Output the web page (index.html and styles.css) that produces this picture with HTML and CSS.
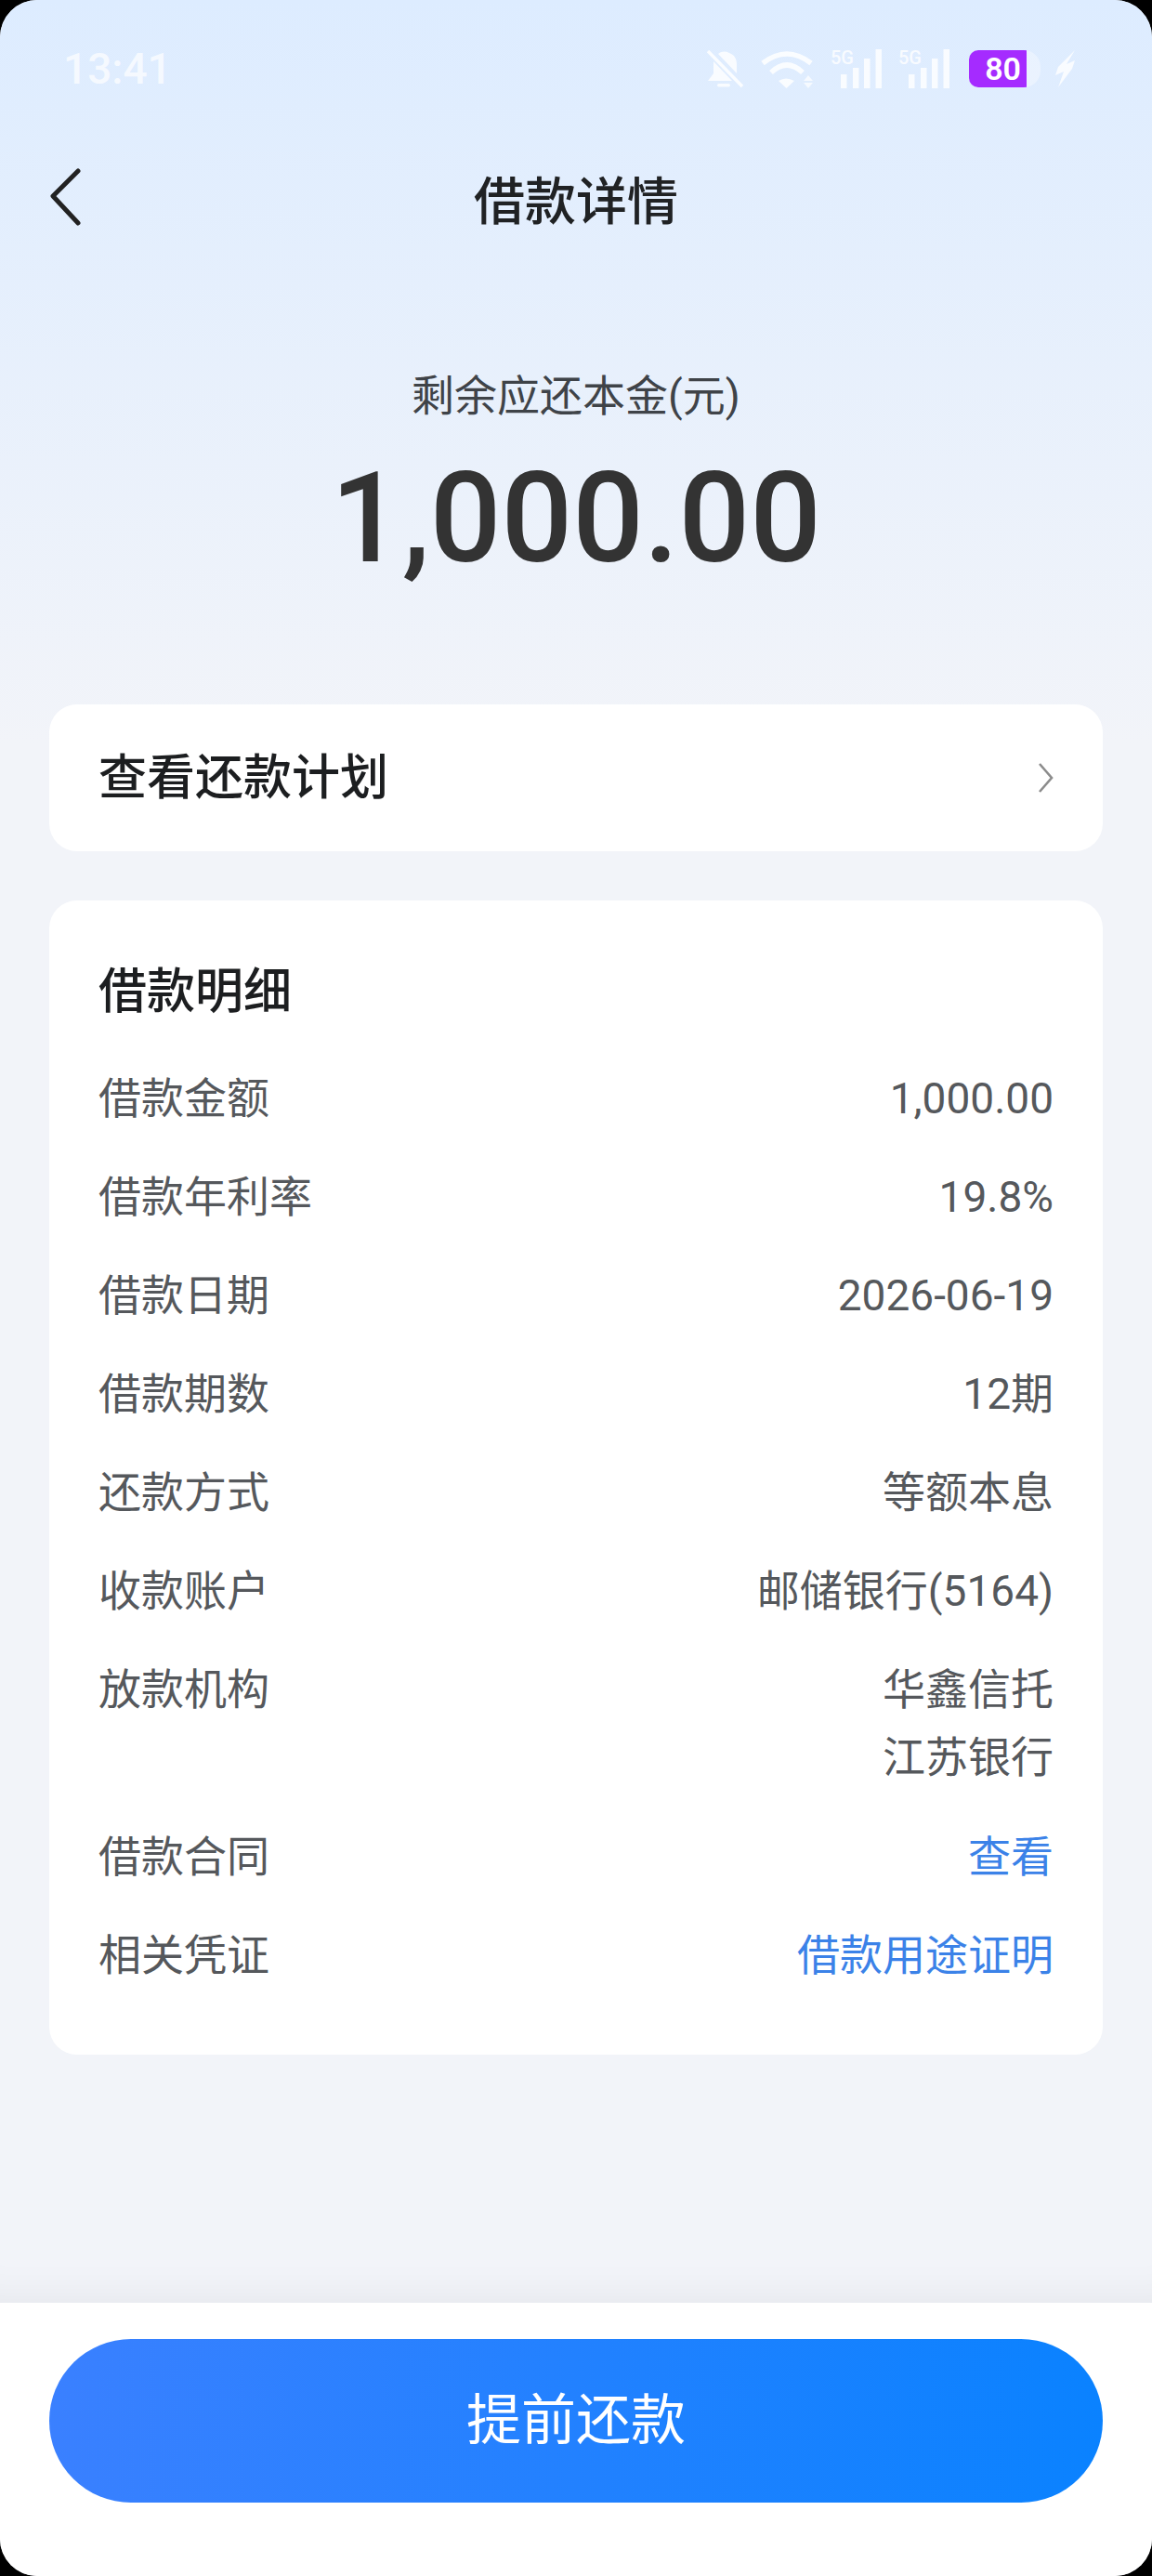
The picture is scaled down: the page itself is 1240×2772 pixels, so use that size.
FILE: index.html
```html
<!DOCTYPE html>
<html lang="zh-CN">
<head>
<meta charset="utf-8">
<title>借款详情</title>
<link rel="stylesheet" href="styles.css">
</head>
<body>
<div class="phone">
  <main class="content">
    <div class="status">
      <span class="time">13:41</span>
      <div class="status-icons">
        <svg width="42" height="41" viewBox="0 0 42 41"><path d="M3 1l37 38" fill="none" stroke="#fff" stroke-width="3.5" opacity=".85"/><path d="M14 4c4-3 8-3 12-1 6 2 8 7 8 12v10L14 4zM9 12L29 33H3l6-8z" fill="#fff" opacity=".8"/><rect x="13" y="36" width="14" height="3.5" rx="1.7" fill="#fff" opacity=".8"/></svg>
        <svg width="57" height="41" viewBox="0 0 57 41"><path d="M2 14Q28 -6 54 14M11 24Q28 8 45 24" fill="none" stroke="#fff" stroke-width="5.5" opacity=".85"/><path d="M19 33Q27 28 36 33L27.5 41z" fill="#fff" opacity=".85"/><path d="M51 27l5 6H46zM46 35h10l-5 6z" fill="#fff" opacity=".7"/></svg>
        <div class="sig"><span class="g5">5G</span><svg width="55" height="42" viewBox="0 0 55 42"><rect x="11" y="27" width="6.5" height="15" fill="#fff" opacity=".8"/><rect x="24" y="20" width="6.5" height="22" fill="#fff" opacity=".8"/><rect x="36" y="10" width="6.5" height="32" fill="#fff" opacity=".8"/><rect x="48.5" y="0" width="6.5" height="42" fill="#fff" opacity=".8"/></svg></div>
        <div class="sig"><span class="g5">5G</span><svg width="55" height="42" viewBox="0 0 55 42"><rect x="11" y="27" width="6.5" height="15" fill="#fff" opacity=".8"/><rect x="24" y="20" width="6.5" height="22" fill="#fff" opacity=".8"/><rect x="36" y="10" width="6.5" height="32" fill="#fff" opacity=".8"/><rect x="48.5" y="0" width="6.5" height="42" fill="#fff" opacity=".8"/></svg></div>
        <div class="batt"><div class="batt-fill"><span class="batt-num">80</span></div></div>
        <svg class="bolt" width="23" height="40" viewBox="0 0 23 40"><path d="M22 0L4 18l-3 9 9-4-6 17L19 20l3-9-9 4z" fill="#fff" opacity=".8"/></svg>
      </div>
    </div>
    <header class="nav">
      <svg class="back" width="36" height="62" viewBox="0 0 36 62"><path d="M31 3L4 30l27 29" fill="none" stroke="#222" stroke-width="5" stroke-linecap="round" stroke-linejoin="round"/></svg>
      <h1 class="title">借款详情</h1>
    </header>
    <section class="hero">
      <div class="hero-label">剩余应还本金(元)</div>
      <div class="hero-amount">1,000.00</div>
    </section>
    <a class="card plan">
      <span class="card-title">查看还款计划</span>
      <svg width="18" height="34" viewBox="0 0 18 34"><path d="M3 2l13 15L3 32" fill="none" stroke="#8c8c8c" stroke-width="2.6"/></svg>
    </a>
    <section class="card details">
      <h2 class="card-title details-title">借款明细</h2>
      <div class="row"><span>借款金额</span><span>1,000.00</span></div>
      <div class="row"><span>借款年利率</span><span>19.8%</span></div>
      <div class="row"><span>借款日期</span><span>2026-06-19</span></div>
      <div class="row"><span>借款期数</span><span>12期</span></div>
      <div class="row"><span>还款方式</span><span>等额本息</span></div>
      <div class="row"><span>收款账户</span><span>邮储银行(5164)</span></div>
      <div class="row row-multi"><span>放款机构</span><span class="multi">华鑫信托<br>江苏银行</span></div>
      <div class="row"><span>借款合同</span><span class="link">查看</span></div>
      <div class="row"><span>相关凭证</span><span class="link">借款用途证明</span></div>
    </section>
  </main>
  <footer class="footer">
    <button class="cta">提前还款</button>
  </footer>
</div>
</body>
</html>
```
FILE: styles.css
```css
* { box-sizing: border-box; margin: 0; padding: 0; }
html, body { width: 1240px; height: 2772px; background: #000; overflow: hidden; }
body { font-family: Roboto, "Noto Sans CJK SC", sans-serif; }
.phone { width: 1240px; height: 2772px; border-radius: 40px; overflow: hidden; display: flex; flex-direction: column; background: #f2f4f9; }
.content { flex: 1; background: linear-gradient(180deg, #ddecff 0, #f2f4f9 800px); box-shadow: inset 0 -50px 50px -50px rgba(0,0,0,.07); padding: 0 53px; }
.status { height: 148px; display: flex; justify-content: space-between; align-items: center; padding: 0 29px 0 15px; color: #fff; }
.time { font-size: 46px; font-weight: 500; opacity: .7; }
.status-icons { display: flex; align-items: center; gap: 18px; }
.sig { position: relative; width: 55px; height: 42px; display: flex; }
.g5 { position: absolute; left: 0; top: -1px; font-size: 20px; line-height: 20px; font-weight: 500; color: #fff; opacity: .8; }
.batt { width: 77px; height: 40px; margin-left: 3px; background: rgba(255,255,255,.35); border-radius: 10px 18px 18px 10px; overflow: hidden; }
.batt-fill { width: 62px; height: 40px; background: #a52bff; display: flex; align-items: center; justify-content: flex-end; padding-right: 6px; }
.batt-num { color: #fff; font-size: 34px; font-weight: 600; line-height: 40px; }
.bolt { margin-left: -3px; }
.nav { height: 136px; position: relative; display: flex; align-items: center; justify-content: center; }
.back { position: absolute; left: 0; top: 33px; }
.title { font-size: 55px; font-weight: 500; color: #202224; padding-bottom: 8px; }
.hero { text-align: center; padding-top: 109px; height: 474px; }
.hero-label { font-size: 46px; color: #3f4348; line-height: 66px; }
.hero-amount { font-size: 135px; font-weight: 500; color: #333; line-height: 160px; margin-top: 19px; }
.card { display: block; background: #fff; border-radius: 30px; }
.plan { height: 158px; display: flex; align-items: center; justify-content: space-between; padding: 0 53px; margin-bottom: 53px; }
.plan .card-title { padding-top: 2px; }
.card-title { font-size: 52px; font-weight: 500; color: #1c1e20; line-height: 70px; }
.details { padding: 0 53px 54px; }
.details-title { padding-top: 64px; height: 160px; }
.row { display: flex; justify-content: space-between; align-items: center; font-size: 46px; line-height: 66px; color: #55585c; height: 106px; }
.row-multi { height: 180px; align-items: flex-start; padding-top: 20px; }
.multi { text-align: right; line-height: 73px; margin-top: -3px; }
.link { color: #3b82e8; }
.footer { height: 294px; background: #fff; padding: 39px 53px 0; }
.cta { display: block; width: 100%; height: 176px; border: 0; border-radius: 88px; padding-bottom: 12px; background: linear-gradient(90deg, #3a80ff, #0a82ff); color: #fff; font-size: 59px; font-family: inherit; }
```
